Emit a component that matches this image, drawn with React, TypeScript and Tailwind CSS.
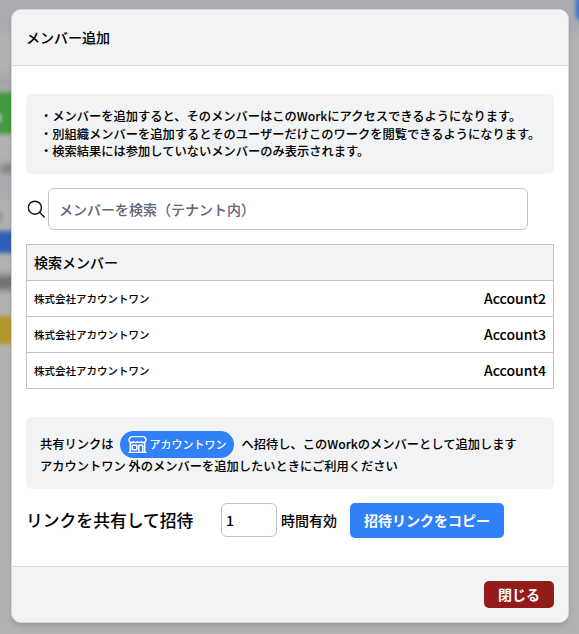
import { HiOutlineBuildingStorefront } from 'react-icons/hi2';

const members = ['Account2', 'Account3', 'Account4'];

function SearchIcon() {
  return (
    <svg className="size-5 shrink-0" viewBox="0 0 20 20" fill="none" stroke="#111" strokeWidth="1.4">
      <circle cx="8.9" cy="8.7" r="6.5" />
      <path d="M13.5 13.3 18.2 18" strokeLinecap="round" />
    </svg>
  );
}

function Backdrop() {
  return (
    <div className="absolute inset-0 overflow-hidden bg-[#b1b1b1]">
      <div className="absolute -inset-x-4 -top-4 h-12 bg-[#a9abaf] blur-[2px]" />
      <div className="absolute -left-4 top-[74px] h-4 w-10 bg-[#a6a6a7] blur-[4px]" />
      <div className="absolute -left-4 top-[92px] h-[42px] w-10 bg-[#449a40] blur-[2px]" />
      <div className="absolute -left-1 top-[113px] h-[10px] w-[6px] rounded-full bg-[#8fba8d] blur-[1.5px]" />
      <div className="absolute left-0 top-[164px] h-[10px] w-10 bg-[#858687] blur-[3px]" />
      <div className="absolute -left-4 top-[178px] h-[22px] w-10 bg-[#a9abaf] blur-[2px]" />
      <div className="absolute -left-4 top-[211px] h-[11px] w-[18px] bg-[#939393] blur-[2px]" />
      <div className="absolute -left-4 top-[231px] h-[22px] w-10 bg-[#2e60b8] blur-[2px]" />
      <div className="absolute -left-2 top-[275px] h-[15px] w-10 bg-[#737373] blur-[3px]" />
      <div className="absolute -left-4 top-[316px] h-[28px] w-10 bg-[#b5982d] blur-[2px]" />
      <div className="absolute -right-[5px] -top-1 h-6 w-2 rounded-full bg-[#376fcd] blur-[2px]" />
    </div>
  );
}

export default function App() {
  return (
    <div className="relative h-[634px] w-[579px] overflow-hidden px-[11px] pt-[9px] font-['Noto_Sans_CJK_JP',sans-serif] text-[14px] font-medium text-black [-webkit-text-stroke:0.06px]">
      <Backdrop />
      <div className="relative flex h-[614px] w-[558px] flex-col overflow-hidden rounded-[10px] border border-[#d4d5d7] bg-white shadow-md">
        <header className="flex h-[56px] shrink-0 items-center border-b border-[#d8d9db] bg-[#f1f3f5] px-[14px]">メンバー追加</header>
        <main className="flex-1 px-[14px] pt-7">
          <div className="h-[80px] whitespace-nowrap rounded-[6px] bg-[#f1f3f5] px-[14px] pt-[14px] text-[12.25px] leading-[17.5px]">
            <p>・メンバーを追加すると、そのメンバーはこのWorkにアクセスできるようになります。</p>
            <p>・別組織メンバーを追加するとそのユーザーだけこのワークを閲覧できるようになります。</p>
            <p>・検索結果には参加していないメンバーのみ表示されます。</p>
          </div>
          <div className="mt-[14px] flex items-center gap-[2px]">
            <SearchIcon />
            <input
              className="h-[42px] w-[480px] rounded-[6px] border border-[#c1c3c6] bg-white px-[10px] placeholder:text-[#5f6675]"
              placeholder="メンバーを検索（テナント内）"
            />
          </div>
          <div className="mt-[14px] border border-[#c1c3c6]">
            <div className="flex h-[35px] items-center bg-[#f1f3f5] px-[7px]">検索メンバー</div>
            {members.map((name) => (
              <div key={name} className="flex h-[36px] items-center justify-between border-t border-[#c1c3c6] px-[7px]">
                <span className="text-[10.5px]">株式会社アカウントワン</span>
                <span>{name}</span>
              </div>
            ))}
          </div>
          <div className="mt-7 h-[72px] whitespace-nowrap rounded-[6px] bg-[#f1f3f5] px-[14px] pt-[14px] text-[12.25px]">
            <div className="flex h-[27px] items-center">
              共有リンクは
              <span className="ml-[6px] mr-[8px] flex h-[27px] w-[114px] items-center gap-[2px] rounded-full bg-[#3080f7] pl-[7px] text-[11px] text-white [-webkit-text-stroke:0px]">
                <HiOutlineBuildingStorefront className="size-[21px]" strokeWidth={1.7} />
                アカウントワン
              </span>
              へ招待し、このWorkのメンバーとして追加します
            </div>
            <p className="leading-[17.5px]">アカウントワン 外のメンバーを追加したいときにご利用ください</p>
          </div>
          <div className="mt-[14px] flex items-start leading-[35px]">
            <span className="w-[195px] text-[16.8px]">リンクを共有して招待</span>
            <input className="h-[34px] w-[56px] rounded-[6px] border border-[#c1c3c6] bg-white px-[4px]" defaultValue="1" />
            <span className="ml-[4px]">時間有効</span>
            <button className="ml-[13px] h-[35px] w-[154px] rounded-[5px] bg-[#3080f7] font-bold text-white [-webkit-text-stroke:0px]">招待リンクをコピー</button>
          </div>
        </main>
        <footer className="flex h-[56px] shrink-0 items-center justify-end border-t border-[#d8d9db] bg-[#f1f3f5] px-[14px]">
          <button className="h-[27px] w-[70px] rounded-[5px] bg-[#921c19] font-bold text-white [-webkit-text-stroke:0px]">閉じる</button>
        </footer>
      </div>
    </div>
  );
}
